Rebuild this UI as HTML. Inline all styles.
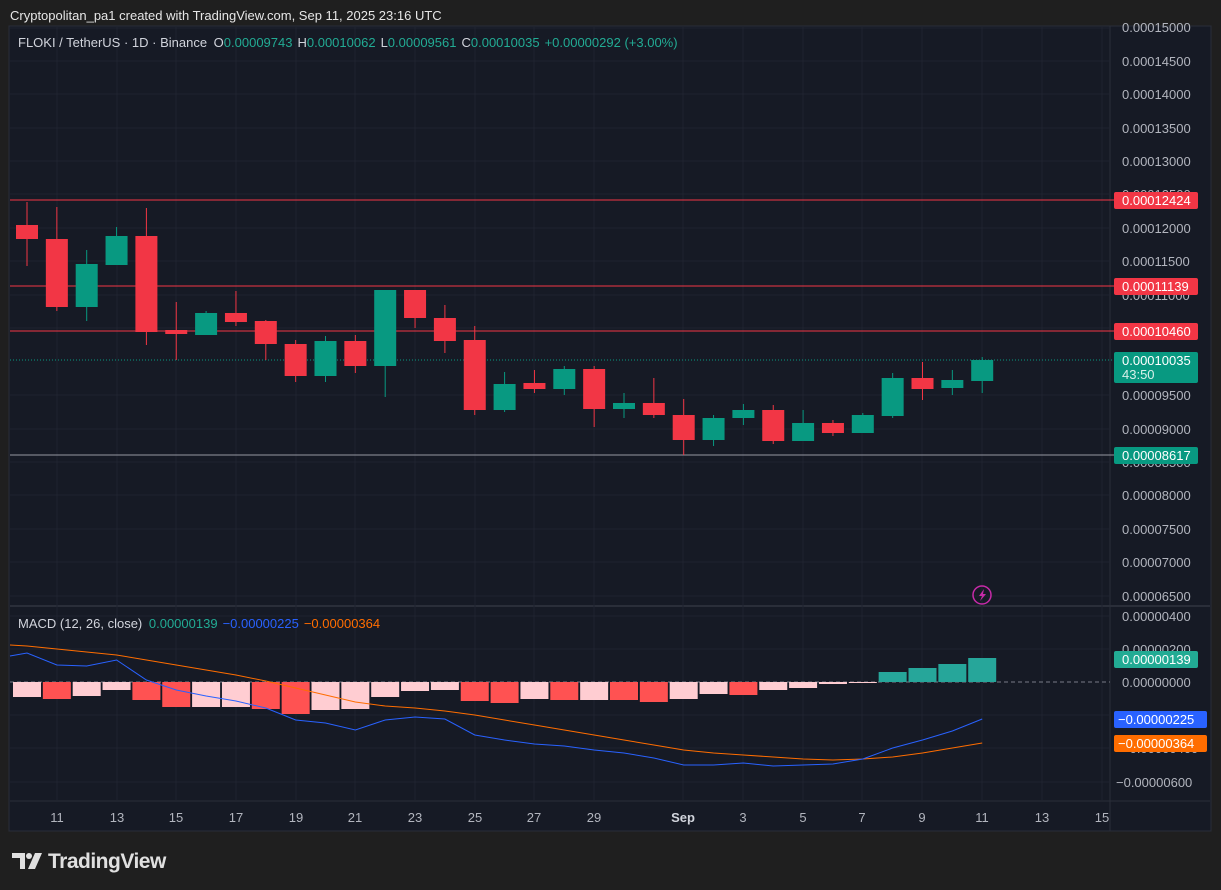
<!DOCTYPE html>
<html><head><meta charset="utf-8">
<style>
html,body{margin:0;padding:0;background:#1f1f1f;width:1221px;height:890px;overflow:hidden;font-family:"Liberation Sans",sans-serif;}
.top{position:absolute;left:10px;top:8px;color:#e6e6e6;font-size:13px;}
svg{position:absolute;left:0;top:0;}
</style></head><body>
<div class="top">Cryptopolitan_pa1 created with TradingView.com, Sep 11, 2025 23:16 UTC</div>
<svg id="s" width="1221" height="890" xmlns="http://www.w3.org/2000/svg" font-family="Liberation Sans, sans-serif">
<rect x="9" y="26" width="1202" height="805" fill="#161a25" stroke="#2a2e39"/>
<line x1="1110" y1="26" x2="1110" y2="831" stroke="#2a2e39"/>
<line x1="10" y1="606" x2="1210" y2="606" stroke="#2a2e39" stroke-width="2"/>
<line x1="10" y1="801" x2="1210" y2="801" stroke="#2a2e39"/>
<g id="grid" stroke="#1f2330" stroke-width="1"></g>
<g id="lv"></g>
<g id="cd"></g>
<g id="mh"></g>
<g id="ml"></g>
<g fill="#b2b5be" font-size="13" id="ax">
<text x="1122" y="32">0.00015000</text>
<text x="1122" y="66">0.00014500</text>
<text x="1122" y="99">0.00014000</text>
<text x="1122" y="133">0.00013500</text>
<text x="1122" y="166">0.00013000</text>
<text x="1122" y="199">0.00012500</text>
<text x="1122" y="233">0.00012000</text>
<text x="1122" y="266">0.00011500</text>
<text x="1122" y="300">0.00011000</text>
<text x="1122" y="400">0.00009500</text>
<text x="1122" y="434">0.00009000</text>
<text x="1122" y="467">0.00008500</text>
<text x="1122" y="500">0.00008000</text>
<text x="1122" y="534">0.00007500</text>
<text x="1122" y="567">0.00007000</text>
<text x="1122" y="601">0.00006500</text>
<text x="1122" y="621">0.00000400</text>
<text x="1122" y="654">0.00000200</text>
<text x="1122" y="687">0.00000000</text>
<text x="1122" y="753">−0.00000400</text>
<text x="1116" y="787">−0.00000600</text>
</g>
<g font-size="13">
<rect x="1114" y="192" width="84" height="17" rx="2" fill="#f23645"/><text x="1122" y="205" fill="#fff">0.00012424</text>
<rect x="1114" y="278" width="84" height="17" rx="2" fill="#f23645"/><text x="1122" y="291" fill="#fff">0.00011139</text>
<rect x="1114" y="323" width="84" height="17" rx="2" fill="#f23645"/><text x="1122" y="336" fill="#fff">0.00010460</text>
<rect x="1114" y="352" width="84" height="31" rx="2" fill="#089981"/><text x="1122" y="365" fill="#fff">0.00010035</text><text x="1122" y="379" fill="#d8f0ea">43:50</text>
<rect x="1114" y="447" width="84" height="17" rx="2" fill="#089981"/><text x="1122" y="460" fill="#fff">0.00008617</text>
<rect x="1114" y="651" width="84" height="17" rx="2" fill="#22ab94"/><text x="1122" y="664" fill="#fff">0.00000139</text>
<rect x="1114" y="711" width="93" height="17" rx="2" fill="#2962ff"/><text x="1118" y="724" fill="#fff">−0.00000225</text>
<rect x="1114" y="735" width="93" height="17" rx="2" fill="#ff6d00"/><text x="1118" y="748" fill="#fff">−0.00000364</text>
</g>
<g fill="#b2b5be" font-size="13" text-anchor="middle">
<text x="57" y="822">11</text><text x="117" y="822">13</text><text x="176" y="822">15</text><text x="236" y="822">17</text><text x="296" y="822">19</text><text x="355" y="822">21</text><text x="415" y="822">23</text><text x="475" y="822">25</text><text x="534" y="822">27</text><text x="594" y="822">29</text><text x="683" y="822" font-weight="bold" fill="#d1d4dc">Sep</text><text x="743" y="822">3</text><text x="803" y="822">5</text><text x="862" y="822">7</text><text x="922" y="822">9</text><text x="982" y="822">11</text><text x="1042" y="822">13</text><text x="1102" y="822">15</text>
</g>
<g font-size="13">
<text x="18" y="47" fill="#d1d4dc">FLOKI / TetherUS · 1D · Binance <tspan dx="3">O</tspan><tspan fill="#22ab94">0.00009743</tspan><tspan dx="5">H</tspan><tspan fill="#22ab94">0.00010062</tspan><tspan dx="5">L</tspan><tspan fill="#22ab94">0.00009561</tspan><tspan dx="5">C</tspan><tspan fill="#22ab94">0.00010035</tspan><tspan dx="5" fill="#22ab94">+0.00000292 (+3.00%)</tspan></text>
<text x="18" y="628" fill="#d1d4dc">MACD (12, 26, close) <tspan dx="3" fill="#22ab94">0.00000139</tspan><tspan dx="5" fill="#2962ff">−0.00000225</tspan><tspan dx="5" fill="#ff6d00">−0.00000364</tspan></text>
</g>
<circle cx="982" cy="595" r="9" fill="none" stroke="#c62aa8" stroke-width="1.5"/>
<path d="M984 589 L979 596 L982 596 L980 601 L986 594 L983 594 Z" fill="#c62aa8"/>
<g fill="#e0e0e0">
<path d="M12 853 H25 V869 H20 V858 H12 Z"/><circle cx="29" cy="856" r="3"/><path d="M35 853 H42 L35 869 H28 Z"/>
</g>
<text x="48" y="868" fill="#e0e0e0" font-size="21" font-weight="bold" letter-spacing="-0.5">TradingView</text>
</svg>
<script>
var NS="http://www.w3.org/2000/svg";
function el(p,t,a){var e=document.createElementNS(NS,t);for(var k in a)e.setAttribute(k,a[k]);document.getElementById(p).appendChild(e);return e;}
var X=function(i){return 27+i*29.85;};
[28,61,94,128,161,194,228,261,295,328,395,429,462,495,529,562,596,616,649,715,748,782].forEach(function(y){el("grid","line",{x1:10,x2:1110,y1:y,y2:y});});
[57,117,176,236,296,355,415,475,534,594,683,743,803,862,922,982,1042,1102].forEach(function(x){el("grid","line",{x1:x,x2:x,y1:27,y2:800});});
[200,286,331].forEach(function(y){el("lv","line",{x1:10,x2:1114,y1:y,y2:y,stroke:"#f23645","stroke-width":1});});
el("lv","line",{x1:10,x2:1114,y1:455,y2:455,stroke:"#9598a1","stroke-width":1});
el("lv","line",{x1:10,x2:1114,y1:360,y2:360,stroke:"#089981","stroke-dasharray":"1 2"});
el("lv","line",{x1:10,x2:1110,y1:682,y2:682,stroke:"#787b86","stroke-dasharray":"4 3"});
var C=[["r",225,239,202,266],["r",239,307,207,311],["g",264,307,250,321],["g",236,265,227,265],["r",236,332,208,345],["r",330,334,302,360],["g",313,335,311,335],["r",313,322,291,326],["r",321,344,320,360],["r",344,376,340,382],["g",341,376,336,382],["r",341,366,335,373],["g",290,366,290,397],["r",290,318,290,328],["r",318,341,305,353],["r",340,410,326,415],["g",384,410,372,412],["r",383,389,370,393],["g",369,389,366,395],["r",369,409,366,427],["g",403,409,393,418],["r",403,415,378,418],["r",415,440,399,455],["g",418,440,415,446],["g",410,418,404,425],["r",410,441,405,444],["g",423,441,410,441],["r",423,433,420,436],["g",415,433,413,433],["g",378,416,373,418],["r",378,389,362,400],["g",380,388,370,395],["g",360,381,357,393]];
C.forEach(function(c,i){var x=X(i),col=c[0]=="r"?"#f23645":"#089981";
el("cd","line",{x1:x,x2:x,y1:c[3],y2:c[4],stroke:col,"stroke-width":1});
el("cd","rect",{x:x-11,y:c[1],width:22,height:Math.max(1,c[2]-c[1]),fill:col});});
var H=[["p",697],["r",699],["p",696],["p",690],["r",700],["r",707],["p",707],["p",707],["r",709],["r",714],["p",710],["p",709],["p",697],["p",691],["p",690],["r",701],["r",703],["p",699],["r",700],["p",700],["r",700],["r",702],["p",699],["p",694],["r",695],["p",690],["p",688],["p",684],["p",683],["g",672],["g",668],["g",664],["g",658]];
H.forEach(function(h,i){var x=X(i)-14,col=h[0]=="r"?"#ff5252":h[0]=="p"?"#ffcdd2":"#26a69a";var y1=Math.min(682,h[1]),y2=Math.max(682,h[1]);
el("mh","rect",{x:x,y:y1,width:28,height:y2-y1,fill:col});});
var B=[653,665,666,660,680,690,696,701,708,720,723,730,720,717,719,735,740,744,746,750,753,758,765,765,763,766,765,764,759,748,740,731,719];
var S=[646,649,652,655,660,665,670,675,681,688,695,702,706,708,711,715,720,725,730,735,740,745,750,753,755,757,759,760,759,757,753,748,743];
function pts(a,y0){var s="10,"+y0;a.forEach(function(y,i){s+=" "+X(i)+","+y;});return s;}
el("ml","polyline",{points:pts(S,645),fill:"none",stroke:"#ff6d00","stroke-width":1});
el("ml","polyline",{points:pts(B,656),fill:"none",stroke:"#2962ff","stroke-width":1});
</script>
</body></html>
